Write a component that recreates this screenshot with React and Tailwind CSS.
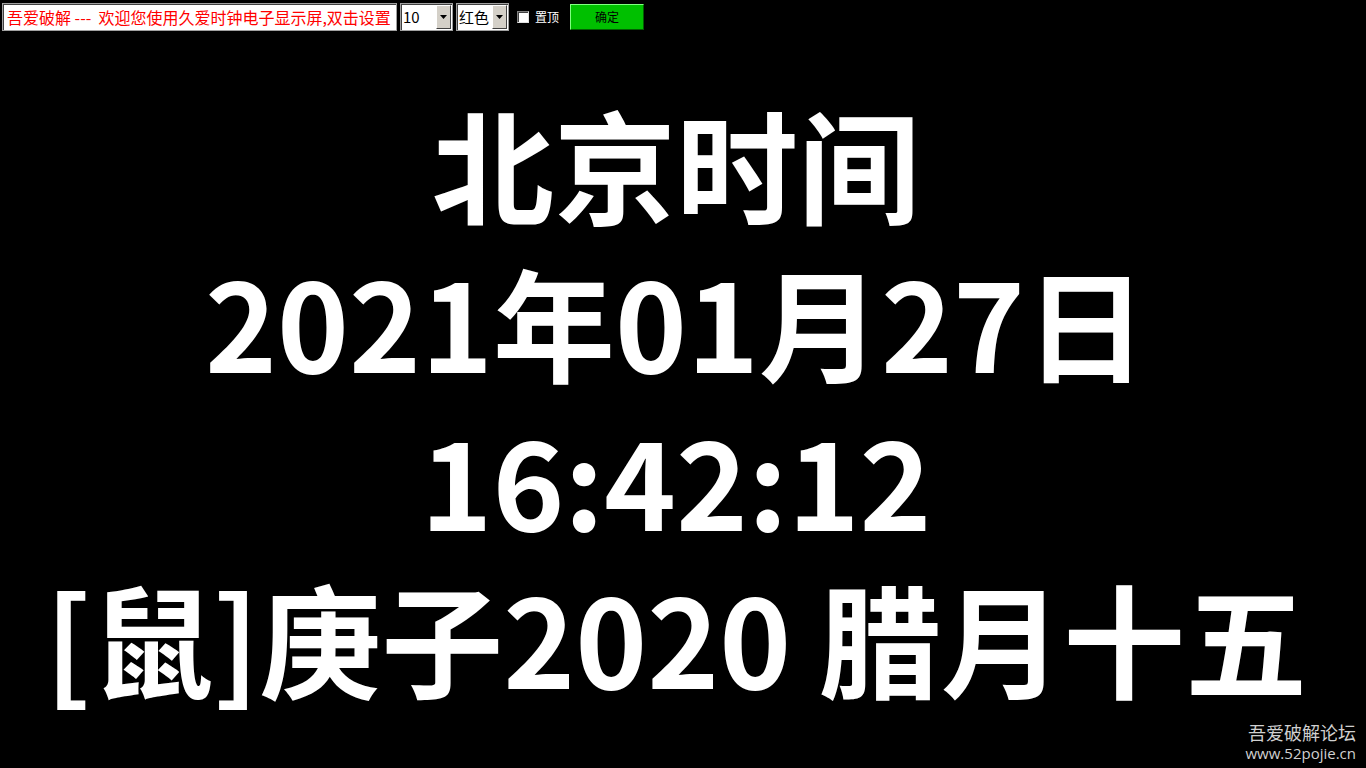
import React from "react";

const cjk = { fontFamily: '"Noto Sans CJK SC", "Noto Sans", sans-serif' };

function Select({ value, width }) {
  return (
    <div
      className={`flex items-center h-[28px] ${width} bg-white border border-[#a0a0a0] shadow-[inset_1px_1px_0_#404040] pl-[2px] pr-[1px]`}
    >
      <span className="flex-1 text-[15px] leading-none text-black whitespace-nowrap" style={cjk}>
        {value}
      </span>
      <div className="shrink-0 w-[15px] h-[24px] bg-[#d4d0c8] border border-t-white border-l-white border-b-[#404040] border-r-[#404040] flex items-center justify-center">
        <svg width="7" height="4" viewBox="0 0 7 4">
          <path d="M0 0h7L3.5 4z" fill="#000" />
        </svg>
      </div>
    </div>
  );
}

export default function App() {
  return (
    <div className="relative w-[1366px] h-[768px] bg-black overflow-hidden" style={cjk}>
      <div className="flex items-center h-[32px] pt-[1px]">
        <div className="ml-[2px] w-[395px] h-[28px] bg-white border border-[#a0a0a0] shadow-[inset_1px_1px_0_#404040] flex items-center pl-[4px] overflow-hidden whitespace-nowrap">
          <span className="text-[16px] text-[#ff0000] leading-none whitespace-pre">
            吾爱破解 ---  欢迎您使用久爱时钟电子显示屏,双击设置
          </span>
        </div>
        <div className="ml-[3px]">
          <Select value="10" width="w-[53px]" />
        </div>
        <div className="ml-[3px]">
          <Select value="红色" width="w-[53px]" />
        </div>
        <div className="ml-[8px] w-[12px] h-[12px] bg-white border border-t-[#808080] border-l-[#808080] border-b-[#e0e0e0] border-r-[#e0e0e0] shadow-[inset_1px_1px_0_#404040]" />
        <span className="ml-[6px] text-[12px] text-white leading-none">置顶</span>
        <div className="ml-[11px] w-[74px] h-[26px] bg-[#00c000] border border-t-[#80ff80] border-l-[#80ff80] border-b-[#006000] border-r-[#006000] flex items-center justify-center">
          <span className="text-[12px] text-black leading-none">确定</span>
        </div>
      </div>

      <div className="flex flex-col items-center pr-[14px] mt-[51px] text-white font-bold text-[122px] leading-[158px] whitespace-pre">
        <div>北京时间</div>
        <div>2021年01月27日</div>
        <div>16:42:12</div>
        <div>[鼠]庚子2020 腊月十五</div>
      </div>

      <div className="absolute right-[10px] bottom-[5px] flex flex-col items-end text-[#d0d0d0]">
        <span className="text-[18px] leading-[23px]">吾爱破解论坛</span>
        <span className="text-[15px] leading-[19px]" style={{ fontFamily: '"Open Sans", "Noto Sans", sans-serif' }}>
          www.52pojie.cn
        </span>
      </div>
    </div>
  );
}
